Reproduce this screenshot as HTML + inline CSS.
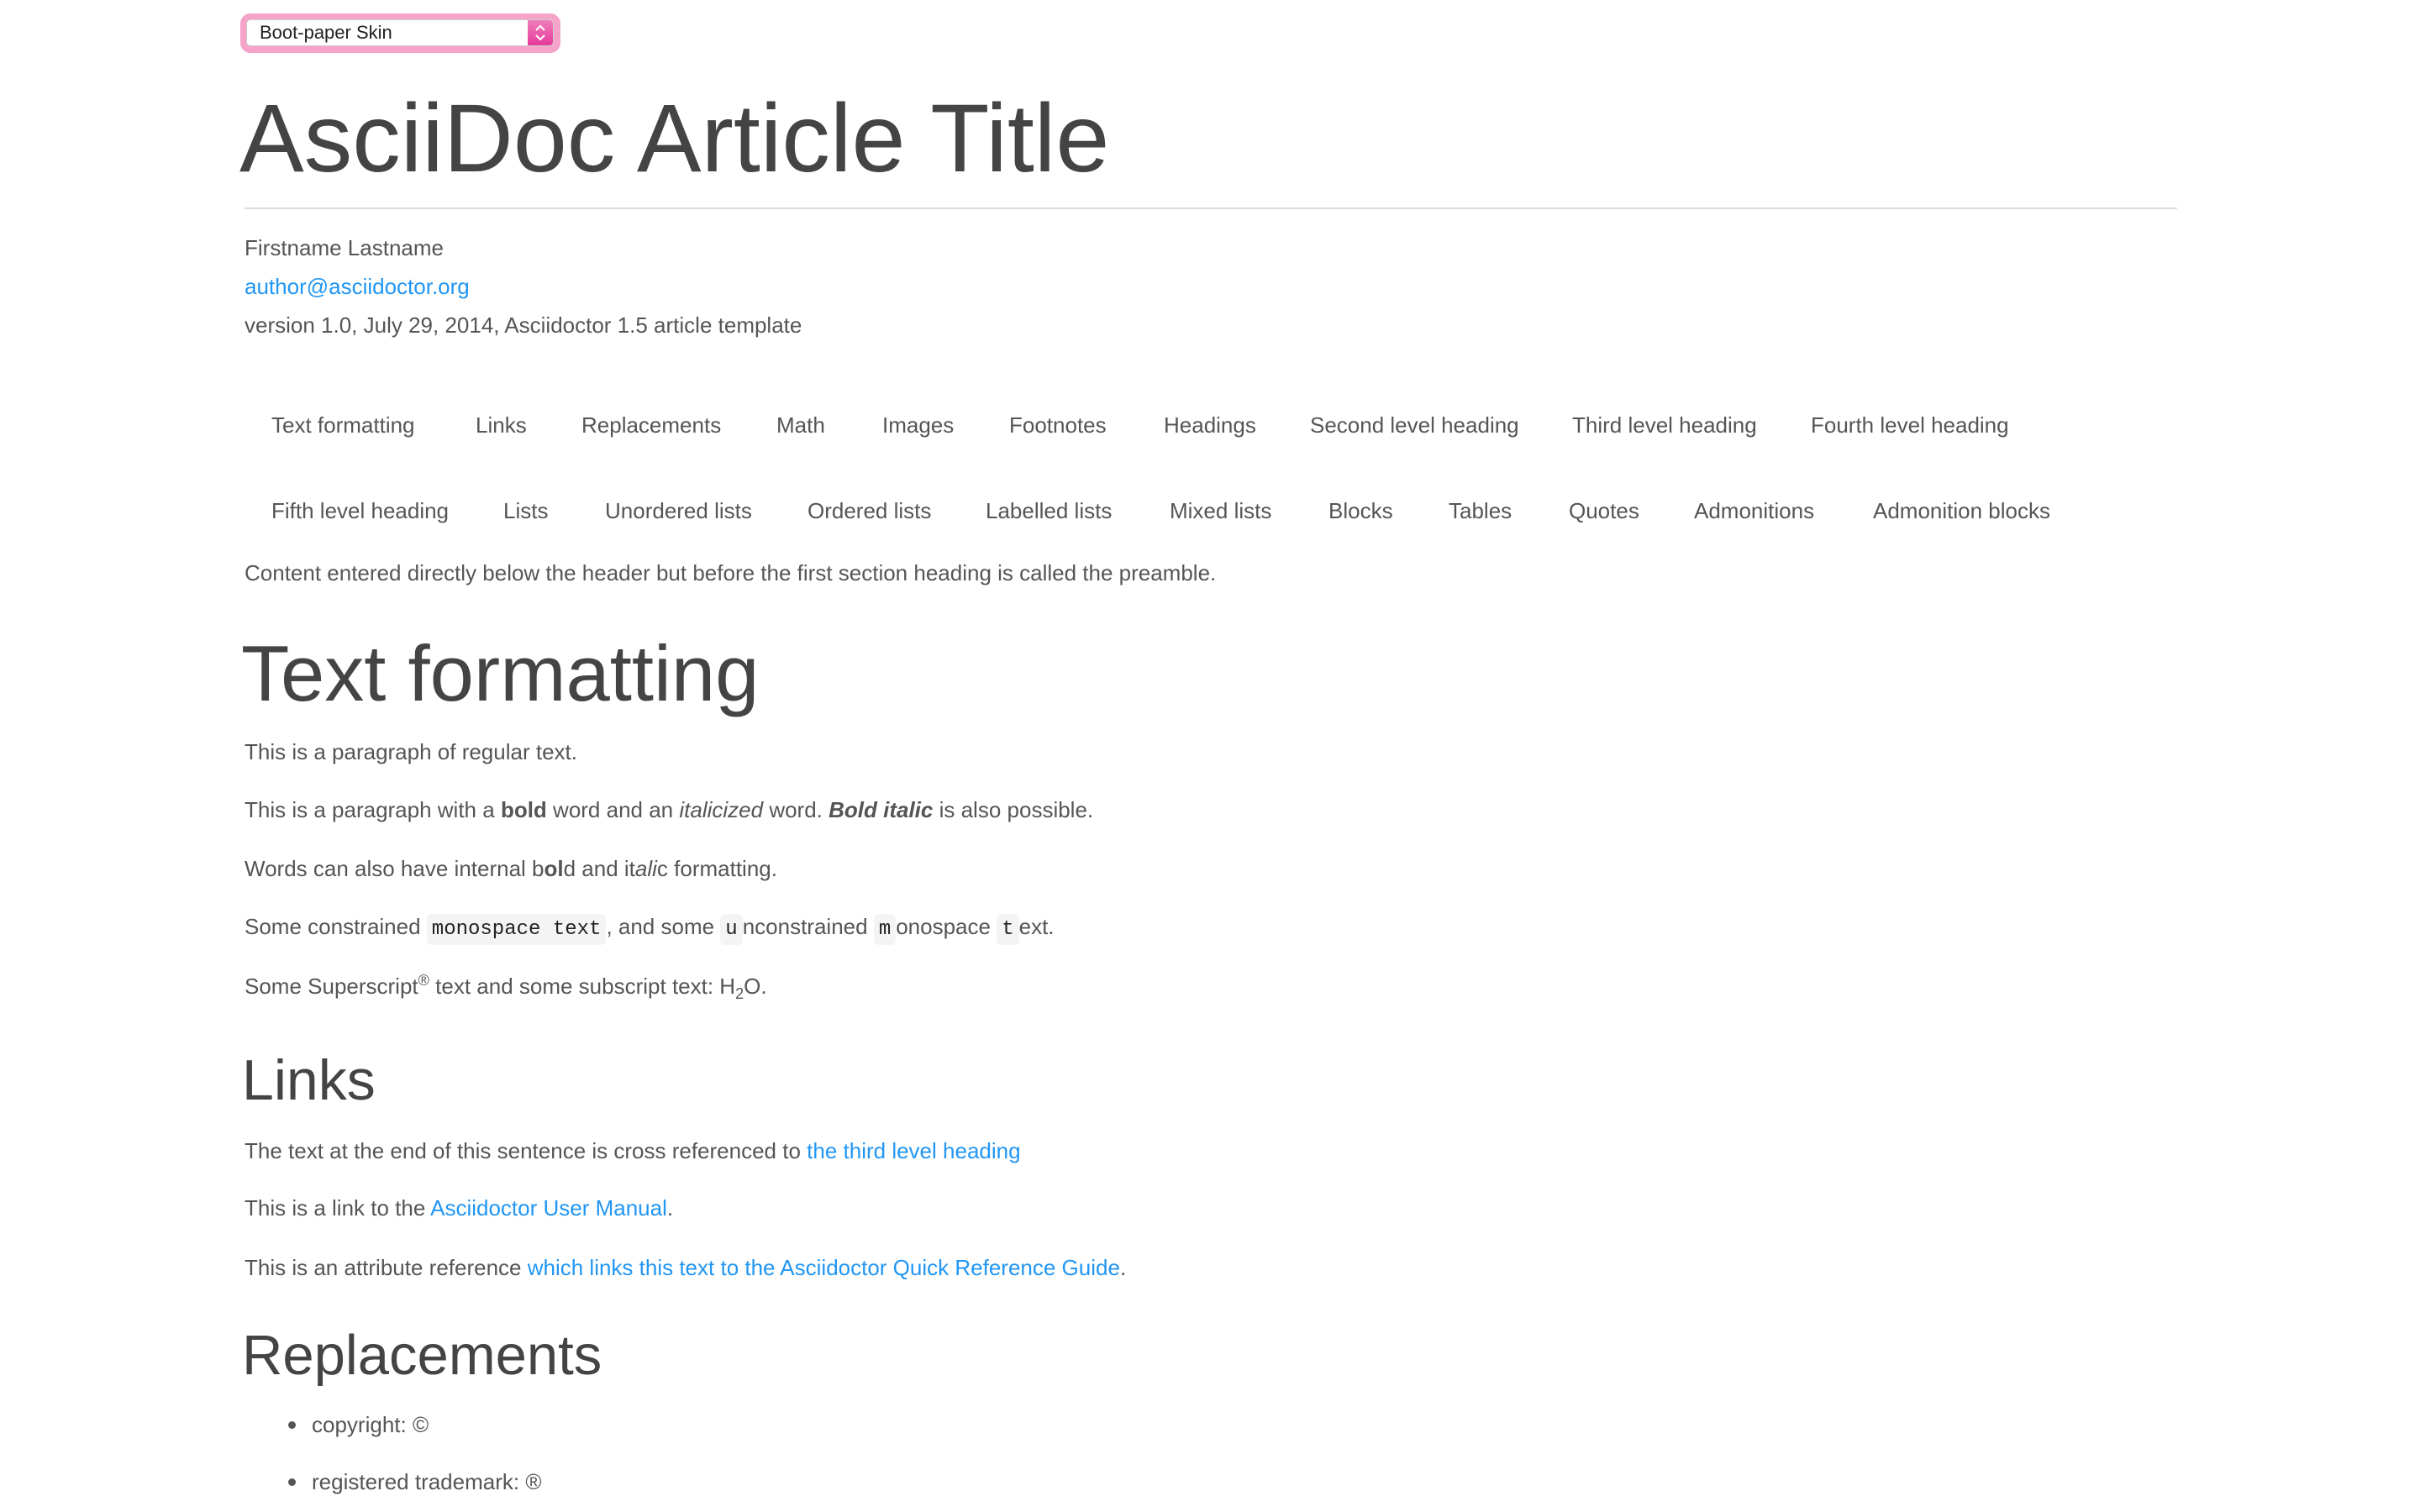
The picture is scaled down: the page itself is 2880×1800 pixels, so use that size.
<!DOCTYPE html>
<html><head><meta charset="utf-8"><style>
html,body{margin:0;padding:0;background:#fff;width:2880px;height:1800px;overflow:hidden}
body{font-family:"Liberation Sans",Arial,sans-serif;color:#555;font-size:26px;position:relative}
.a{position:absolute;line-height:1;white-space:nowrap}
.h{color:#444}
a{color:#2196f3;text-decoration:none}
code{font-family:"Liberation Mono",monospace;font-size:24px;color:#222;background:#f4f4f4;border-radius:6px;padding:5px 6px}
.sel{position:absolute;left:286px;top:16px;width:381px;height:47px;background:#f5a3c9;border-radius:12px}
.sel .in{position:absolute;left:7px;top:7px;width:366px;height:32px;background:#fff;border:1px solid #ccc;border-radius:5px;box-sizing:border-box}
.sel .btn{position:absolute;right:0;top:0;width:30px;height:30px;background:linear-gradient(#ef7fbc,#e6399b);border-radius:0 4px 4px 0}
.bul{position:absolute;width:9px;height:9px;border-radius:50%;background:#555}
</style></head><body>
<div class="sel"><div class="in"><div class="btn"><svg width="30" height="30" viewBox="0 0 30 30"><path d="M10 12 L15 7 L20 12 M10 18 L15 23 L20 18" fill="none" stroke="#fff" stroke-width="2"/></svg></div></div></div>
<div class="a" style="left:309px;top:28px;font-size:22px;color:#222">Boot-paper Skin</div>

<div class="a h" style="left:285px;top:108px;font-size:115px">AsciiDoc Article Title</div>
<div style="position:absolute;left:291px;top:247px;width:2300px;height:2px;background:#dddddd"></div>

<div class="a" style="left:291px;top:282px">Firstname Lastname</div>
<div class="a" style="left:291px;top:328px"><a>author@asciidoctor.org</a></div>
<div class="a" style="left:291px;top:374px">version 1.0, July 29, 2014, Asciidoctor 1.5 article template</div>

<div class="a" style="left:323px;top:493px">Text formatting</div>
<div class="a" style="left:566px;top:493px">Links</div>
<div class="a" style="left:692px;top:493px">Replacements</div>
<div class="a" style="left:924px;top:493px">Math</div>
<div class="a" style="left:1050px;top:493px">Images</div>
<div class="a" style="left:1201px;top:493px">Footnotes</div>
<div class="a" style="left:1385px;top:493px">Headings</div>
<div class="a" style="left:1559px;top:493px">Second level heading</div>
<div class="a" style="left:1871px;top:493px">Third level heading</div>
<div class="a" style="left:2155px;top:493px">Fourth level heading</div>

<div class="a" style="left:323px;top:595px">Fifth level heading</div>
<div class="a" style="left:599px;top:595px">Lists</div>
<div class="a" style="left:720px;top:595px">Unordered lists</div>
<div class="a" style="left:961px;top:595px">Ordered lists</div>
<div class="a" style="left:1173px;top:595px">Labelled lists</div>
<div class="a" style="left:1392px;top:595px">Mixed lists</div>
<div class="a" style="left:1581px;top:595px">Blocks</div>
<div class="a" style="left:1724px;top:595px">Tables</div>
<div class="a" style="left:1867px;top:595px">Quotes</div>
<div class="a" style="left:2016px;top:595px">Admonitions</div>
<div class="a" style="left:2229px;top:595px">Admonition blocks</div>

<div class="a" style="left:291px;top:669px">Content entered directly below the header but before the first section heading is called the preamble.</div>

<div class="a h" style="left:287px;top:755px;font-size:94px">Text formatting</div>
<div class="a" style="left:291px;top:882px">This is a paragraph of regular text.</div>
<div class="a" style="left:291px;top:951px">This is a paragraph with a <b>bold</b> word and an <i>italicized</i> word. <b><i>Bold italic</i></b> is also possible.</div>
<div class="a" style="left:291px;top:1021px">Words can also have internal b<b>ol</b>d and it<i>ali</i>c formatting.</div>
<div class="a" style="left:291px;top:1090px">Some constrained <code>monospace text</code>, and some <code>u</code>nconstrained <code>m</code>onospace <code>t</code>ext.</div>
<div class="a" style="left:291px;top:1158px">Some Superscript<sup style="font-size:18px;vertical-align:10px">®</sup> text and some subscript text: H<sub style="font-size:18px;vertical-align:-6px">2</sub>O.</div>

<div class="a h" style="left:288px;top:1252px;font-size:68px">Links</div>
<div class="a" style="left:291px;top:1357px">The text at the end of this sentence is cross referenced to <a>the third level heading</a></div>
<div class="a" style="left:291px;top:1425px">This is a link to the <a>Asciidoctor User Manual</a>.</div>
<div class="a" style="left:291px;top:1496px">This is an attribute reference <a>which links this text to the Asciidoctor Quick Reference Guide</a>.</div>

<div class="a h" style="left:288px;top:1580px;font-size:67px">Replacements</div>
<div class="bul" style="left:343px;top:1692px"></div>
<div class="a" style="left:371px;top:1683px">copyright: ©</div>
<div class="bul" style="left:343px;top:1760px"></div>
<div class="a" style="left:371px;top:1751px">registered trademark: ®</div>
</body></html>
